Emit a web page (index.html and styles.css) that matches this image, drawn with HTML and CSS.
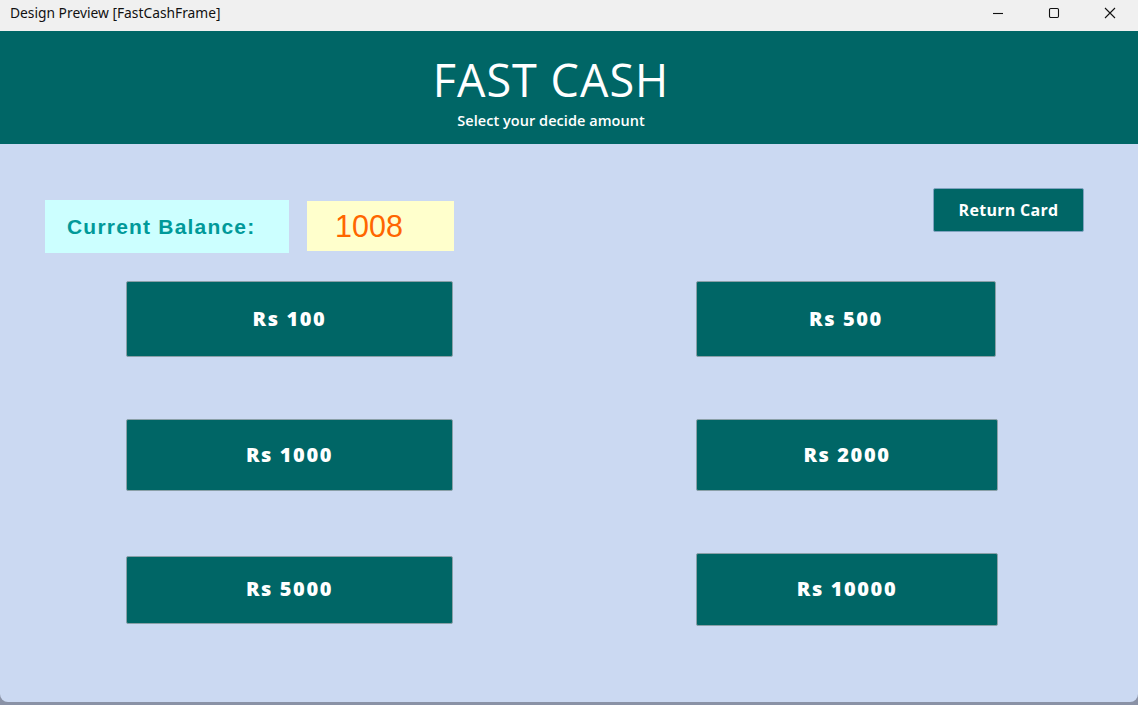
FILE: index.html
```html
<!DOCTYPE html>
<html>
<head>
<meta charset="utf-8">
<link rel="stylesheet" href="styles.css">
</head>
<body>
<div class="window">
  <div class="titlebar">
    <span class="title">Design Preview [FastCashFrame]</span>
    <div class="controls">
      <span class="ctl"><svg width="12" height="12" viewBox="0 0 12 12"><path d="M1 6.5h10" stroke="#111" stroke-width="1.1"/></svg></span>
      <span class="ctl"><svg width="12" height="12" viewBox="0 0 12 12"><rect x="1.5" y="1.5" width="9" height="9" rx="1.2" fill="none" stroke="#111" stroke-width="1.1"/></svg></span>
      <span class="ctl"><svg width="12" height="12" viewBox="0 0 12 12"><path d="M1 1L11 11M11 1L1 11" stroke="#111" stroke-width="1.1"/></svg></span>
    </div>
  </div>
  <header class="header">
    <h1 class="head-title">FAST CASH</h1>
    <p class="head-sub">Select your decide amount</p>
  </header>
  <main class="content">
    <div class="toprow">
      <div class="bal-label">Current Balance:</div>
      <div class="bal-value">1008</div>
      <button class="return-btn">Return Card</button>
    </div>
    <div class="amounts">
      <button class="amt w-l h-76">Rs 100</button>
      <button class="amt w-r1 h-76">Rs 500</button>
      <button class="amt w-l h-72">Rs 1000</button>
      <button class="amt w-r h-72">Rs 2000</button>
      <button class="amt w-l h-68">Rs 5000</button>
      <button class="amt w-r h-73">Rs 10000</button>
    </div>
  </main>
  <div class="bottom-edge"></div>
</div>
</body>
</html>
```
FILE: styles.css
```css
* { box-sizing: border-box; }
html, body { margin: 0; padding: 0; }
body {
  width: 1138px;
  height: 705px;
  overflow: hidden;
  background: #8a92a6;
  font-family: "Open Sans", "Noto Sans", sans-serif;
}
.window {
  display: flex;
  flex-direction: column;
  height: 705px;
}
.titlebar {
  height: 31px;
  background: #f0f0f0;
  display: flex;
  align-items: center;
  justify-content: space-between;
  padding-left: 10px;
}
.title {
  font-family: "Noto Sans", "Open Sans", sans-serif;
  font-size: 13.8px;
  color: #111;
  margin-top: -6px;
}
.controls {
  display: flex;
  height: 100%;
  align-items: center;
  margin-top: -6px;
}
.ctl {
  width: 56px;
  display: flex;
  justify-content: center;
}
.ctl svg { display: block; }
.header {
  height: 113px;
  background: #006666;
  color: #fff;
  display: flex;
  flex-direction: column;
  align-items: center;
  padding-right: 36px;
}
.head-title {
  margin: 23px 0 0;
  font-family: "Open Sans", sans-serif;
  font-weight: 400;
  font-size: 45px;
  line-height: 52px;
  letter-spacing: 1px;
}
.head-sub {
  margin: 6px 0 0;
  font-family: "Open Sans", sans-serif;
  font-weight: 600;
  font-size: 14.5px;
  line-height: 18px;
  letter-spacing: 0.05px;
}
.content {
  height: 558px;
  background: #cbd9f2;
  border-radius: 0 0 8px 8px;
}
.bottom-edge {
  height: 3px;
}
.toprow {
  display: flex;
  align-items: flex-start;
  padding: 44px 54px 0 45px;
}
.bal-label {
  margin-top: 12px;
  width: 244px;
  height: 53px;
  background: #ccffff;
  color: #009999;
  font-family: "Liberation Sans", Arial, sans-serif;
  font-weight: 700;
  font-size: 21px;
  letter-spacing: 1.2px;
  display: flex;
  align-items: center;
  padding-left: 22px;
}
.bal-value {
  margin-top: 13px;
  margin-left: 18px;
  width: 147px;
  height: 50px;
  background: #ffffcc;
  color: #ff6600;
  font-family: "Liberation Sans", Arial, sans-serif;
  font-size: 30.5px;
  display: flex;
  align-items: center;
  padding-left: 28px;
}
.return-btn {
  margin-left: auto;
  width: 151px;
  height: 44px;
  background: #006666;
  border: 1px solid #7fa3c0;
  border-radius: 2px;
  color: #fff;
  font-family: "Open Sans", sans-serif;
  font-weight: 700;
  font-size: 16px;
  letter-spacing: 0.3px;
  padding: 0;
}
.amounts {
  margin-top: 28px;
  margin-left: 126px;
  display: grid;
  grid-template-columns: 327px 302px;
  grid-template-rows: 76px 72px 73px;
  column-gap: 243px;
  row-gap: 62px;
  align-items: center;
  justify-items: start;
}
.amt {
  background: #006666;
  border: 1px solid #8aa0a8;
  border-radius: 2px;
  color: #fff;
  font-family: "Open Sans", sans-serif;
  font-weight: 800;
  font-size: 20px;
  letter-spacing: 1.6px;
  padding: 0 0 2px;
}
.w-l { width: 327px; }
.w-r { width: 302px; }
.w-r1 { width: 300px; }
.h-76 { height: 76px; }
.h-72 { height: 72px; }
.h-68 { height: 68px; }
.h-73 { height: 73px; }
```
